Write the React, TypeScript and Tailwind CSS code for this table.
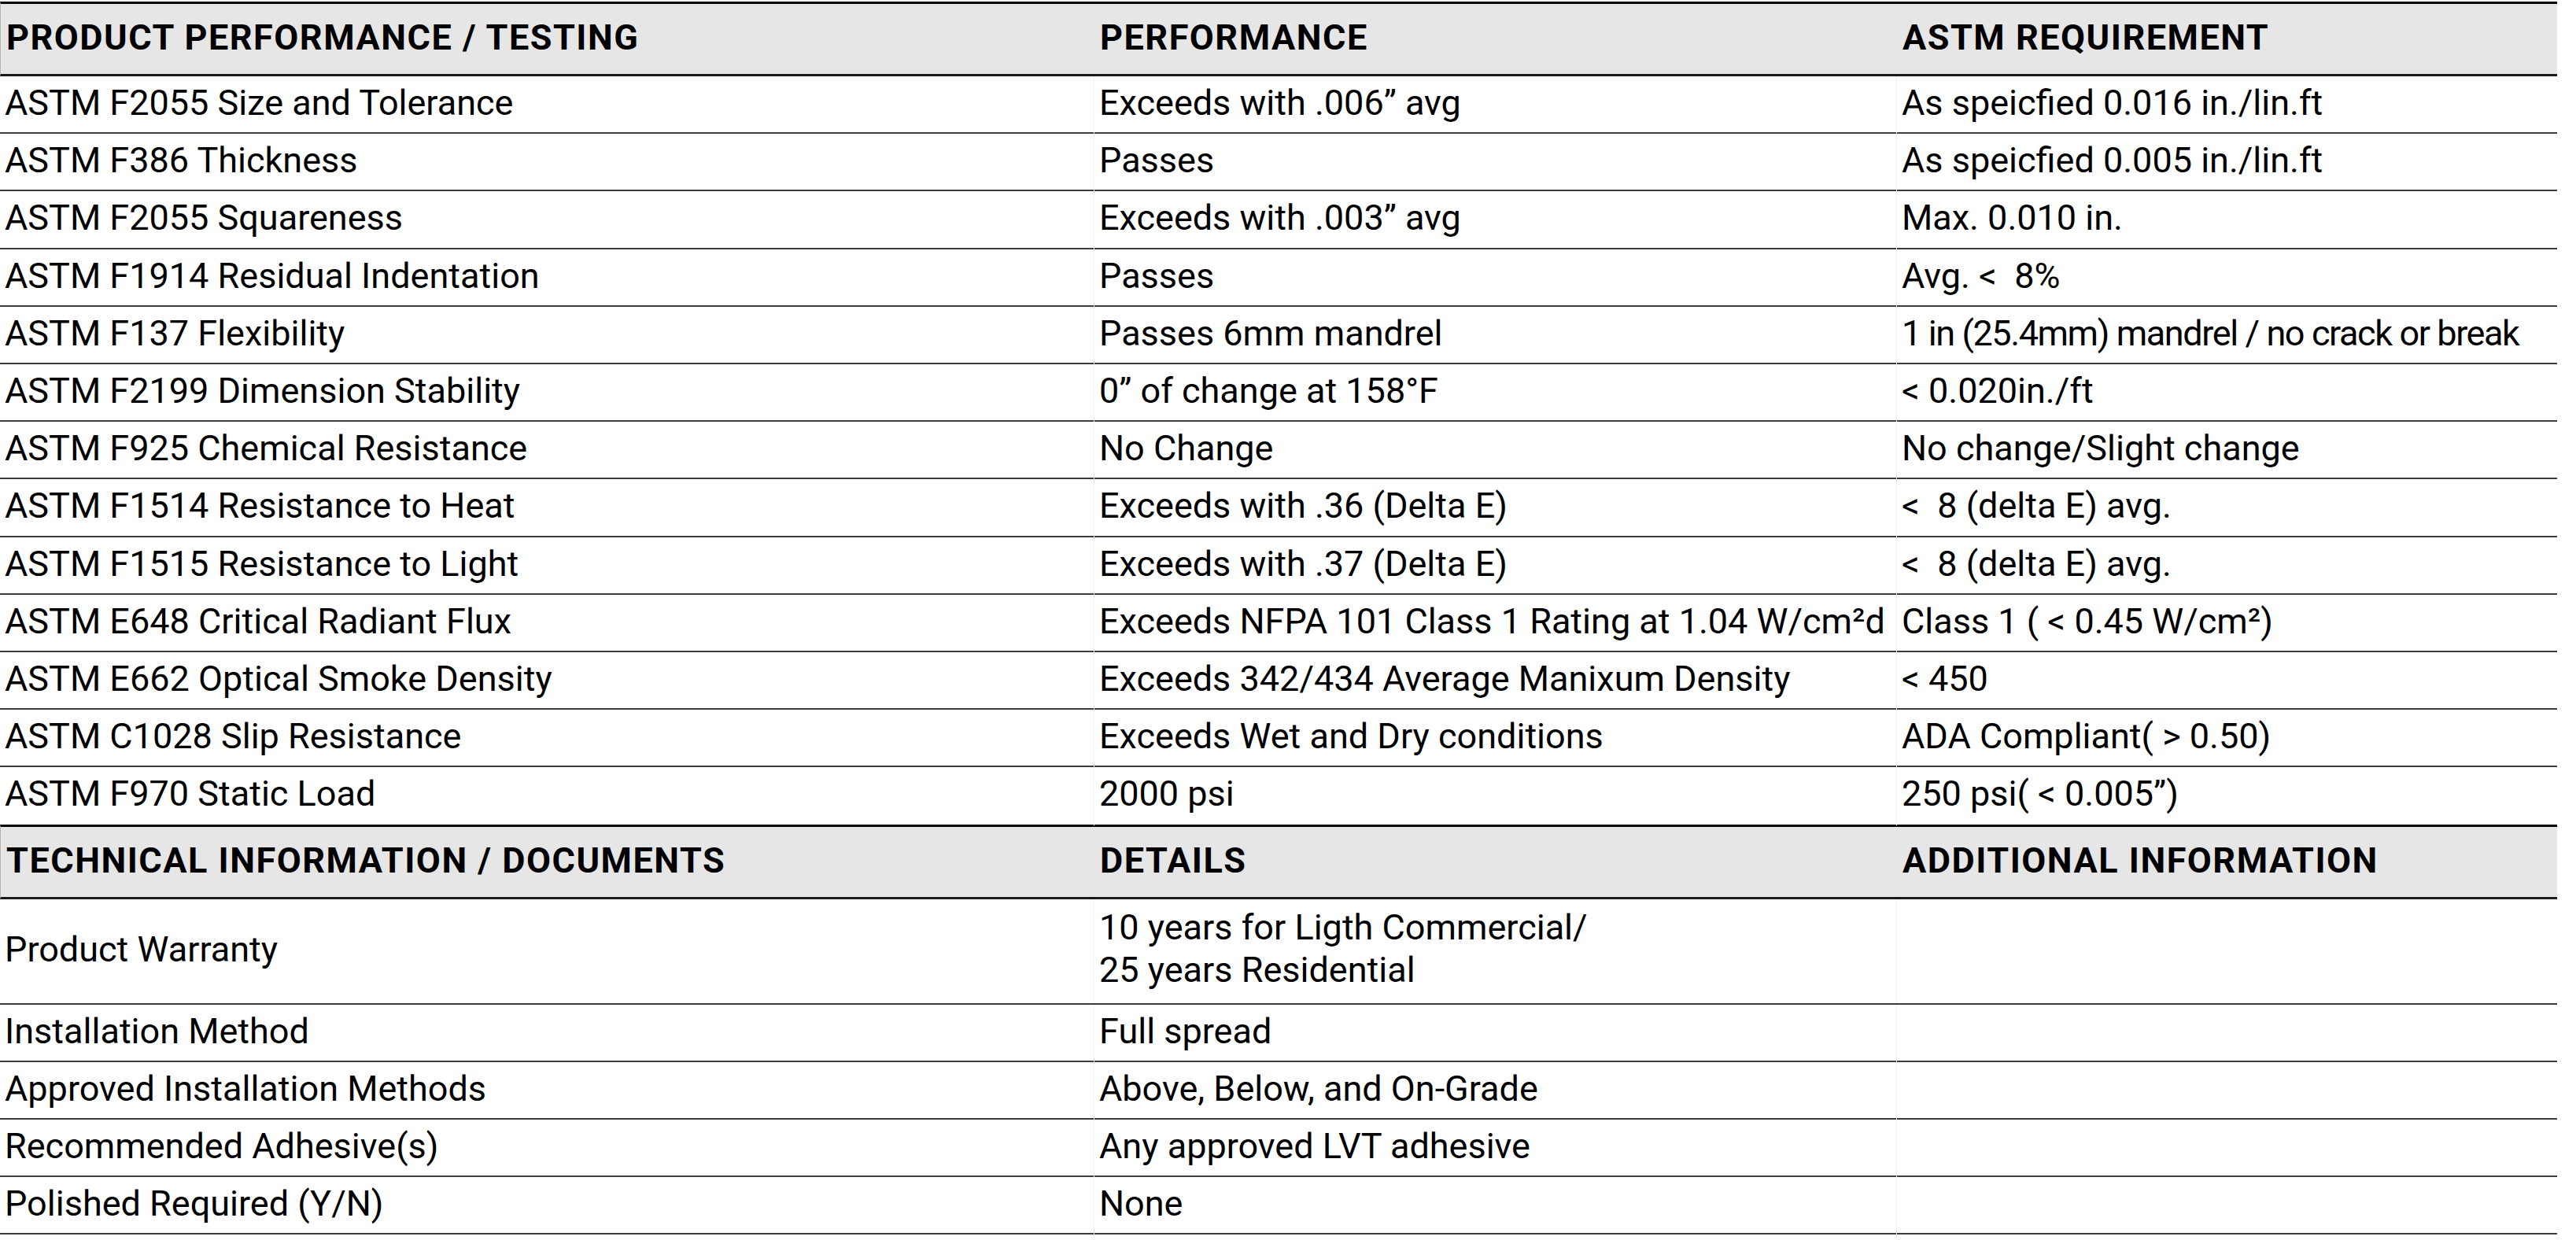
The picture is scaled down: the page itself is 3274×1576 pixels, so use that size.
const perfRows: [string, string, string][] = [
  ["ASTM F2055 Size and Tolerance", "Exceeds with .006” avg", "As speicfied 0.016 in./lin.ft"],
  ["ASTM F386 Thickness", "Passes", "As speicfied 0.005 in./lin.ft"],
  ["ASTM F2055 Squareness", "Exceeds with .003” avg", "Max. 0.010 in."],
  ["ASTM F1914 Residual Indentation", "Passes", "Avg. <  8%"],
  ["ASTM F137 Flexibility", "Passes 6mm mandrel", "1 in (25.4mm) mandrel / no crack or break"],
  ["ASTM F2199 Dimension Stability", "0” of change at 158°F", "< 0.020in./ft"],
  ["ASTM F925 Chemical Resistance", "No Change", "No change/Slight change"],
  ["ASTM F1514 Resistance to Heat", "Exceeds with .36 (Delta E)", "<  8 (delta E) avg."],
  ["ASTM F1515 Resistance to Light", "Exceeds with .37 (Delta E)", "<  8 (delta E) avg."],
  ["ASTM E648 Critical Radiant Flux", "Exceeds NFPA 101 Class 1 Rating at 1.04 W/cm²d", "Class 1 ( < 0.45 W/cm²)"],
  ["ASTM E662 Optical Smoke Density", "Exceeds 342/434 Average Manixum Density", "< 450"],
  ["ASTM C1028 Slip Resistance", "Exceeds Wet and Dry conditions", "ADA Compliant( > 0.50)"],
  ["ASTM F970 Static Load", "2000 psi", "250 psi( < 0.005”)"],
]

const techRows: [string, string, string][] = [
  ["Installation Method", "Full spread", ""],
  ["Approved Installation Methods", "Above, Below, and On-Grade", ""],
  ["Recommended Adhesive(s)", "Any approved LVT adhesive", ""],
  ["Polished Required (Y/N)", "None", ""],
]

const cols = "grid grid-cols-[1390px_1020px_840px]"

function HeadRow({ labels }: { labels: [string, string, string] }) {
  return (
    <div className={`${cols} h-[95px] border-t-[3px] border-b-[3px] border-t-black border-b-[#1a1a1a] bg-[#e6e6e6] border-l border-l-[#b5b5b5]`}>
      {labels.map((l, i) => (
        <div key={i} className="flex items-center pl-[7px] pb-[4px] font-bold tracking-[1.5px] whitespace-nowrap">
          {l}
        </div>
      ))}
    </div>
  )
}

function Cell({ children, first, tight }: { children: React.ReactNode; first?: boolean; tight?: boolean }) {
  return (
    <div
      className={`flex items-center pl-[6px] pb-[6px] whitespace-pre ${first ? "" : "border-l border-l-[#f0f0f0]"} ${
        tight ? "tracking-[-1.4px]" : ""
      }`}
    >
      {children}
    </div>
  )
}

export default function App() {
  return (
    <div className="min-h-screen bg-white pt-[2px] font-['Roboto',sans-serif] text-[45px] text-black">
      <div className="w-[3250px]">
        <HeadRow labels={["PRODUCT PERFORMANCE / TESTING", "PERFORMANCE", "ASTM REQUIREMENT"]} />
        {perfRows.map((r, i) => (
          <div
            key={i}
            className={`${cols} h-[73.2px] ${i < perfRows.length - 1 ? "border-b-2 border-b-[#3c3c3c]" : ""}`}
          >
            <Cell first>{r[0]}</Cell>
            <Cell>{r[1]}</Cell>
            <Cell tight={r[2].startsWith("1 in")}>{r[2]}</Cell>
          </div>
        ))}
        <HeadRow labels={["TECHNICAL INFORMATION / DOCUMENTS", "DETAILS", "ADDITIONAL INFORMATION"]} />
        <div className={`${cols} h-[134px] border-b-2 border-b-[#3c3c3c]`}>
          <Cell first>Product Warranty</Cell>
          <div className="flex flex-col justify-center pl-[6px] pb-[6px] leading-[54px] border-l border-l-[#f0f0f0]">
            <span>10 years for Ligth Commercial/</span>
            <span>25 years Residential</span>
          </div>
          <Cell>{""}</Cell>
        </div>
        {techRows.map((r, i) => (
          <div key={i} className={`${cols} h-[73px] border-b-2 border-b-[#3c3c3c]`}>
            <Cell first>{r[0]}</Cell>
            <Cell>{r[1]}</Cell>
            <Cell>{r[2]}</Cell>
          </div>
        ))}
      </div>
    </div>
  )
}
